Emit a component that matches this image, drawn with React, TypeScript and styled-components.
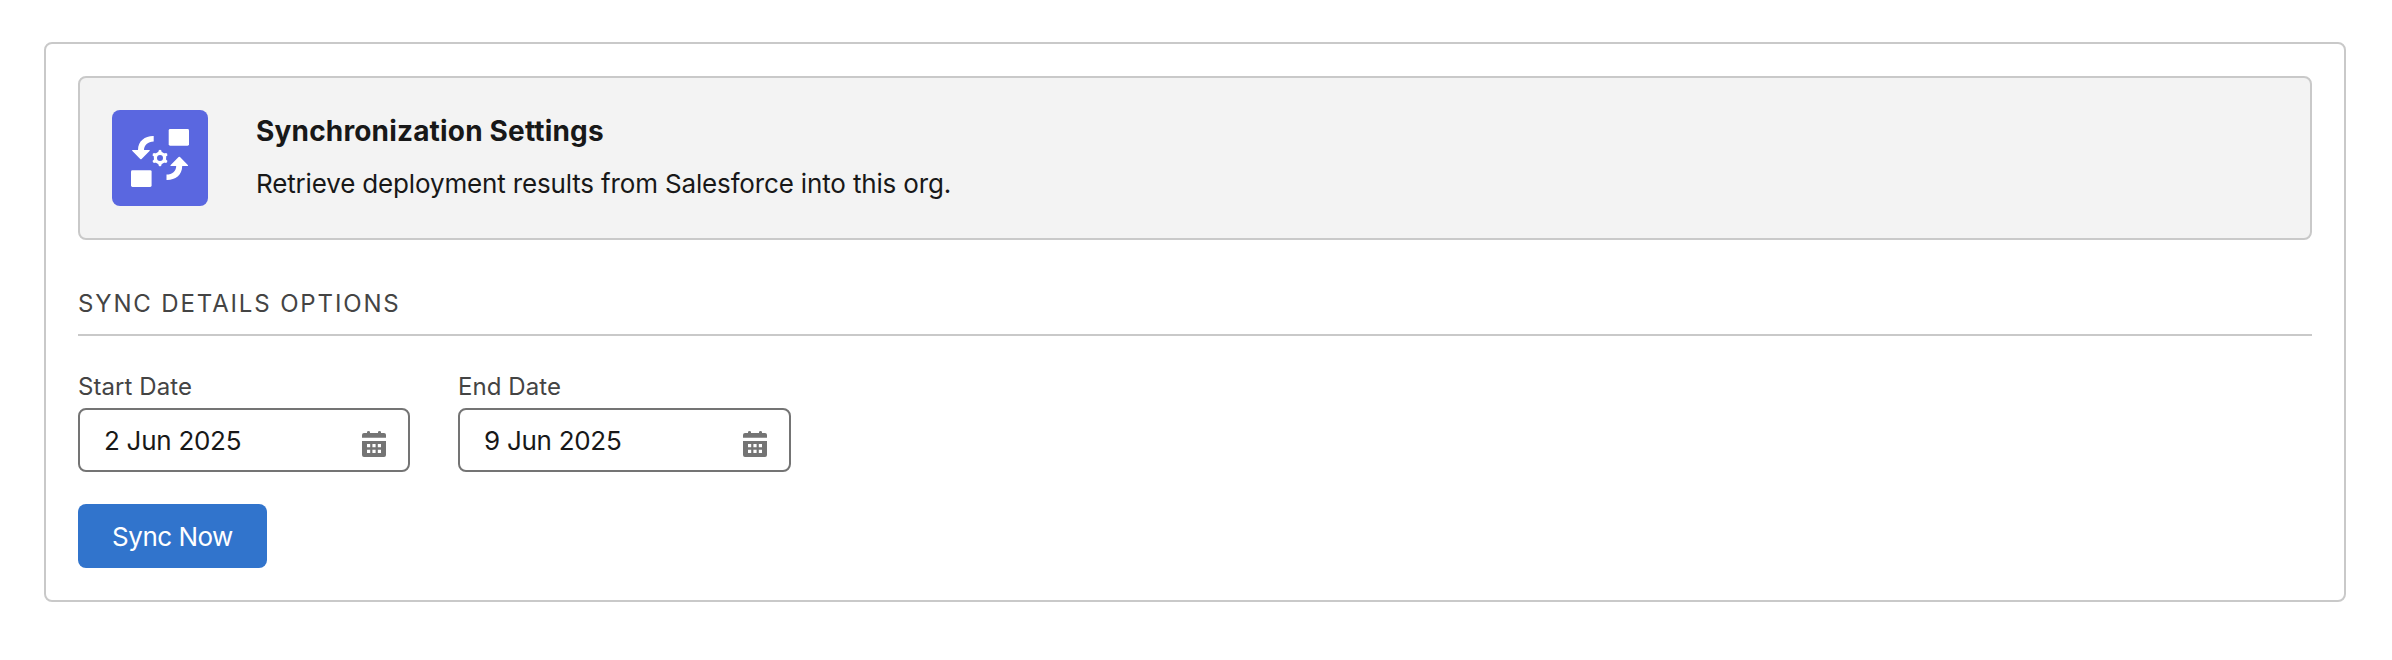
import React from "react";
import styled, { createGlobalStyle } from "styled-components";

const GlobalStyle = createGlobalStyle`
  * { box-sizing: border-box; }
  body {
    margin: 0;
    background: #fff;
    color: #181818;
    font-family: Inter, "Liberation Sans", sans-serif;
  }
`;

const Page = styled.main`
  padding: 42px 46px 58px 44px;
`;

const Card = styled.section`
  height: 560px;
  padding: 32px;
  border: 2px solid #c9c9c9;
  border-radius: 8px;
  background: #fff;
`;

const Banner = styled.header`
  display: flex;
  gap: 48px;
  height: 164px;
  padding: 32px;
  border: 2px solid #c9c9c9;
  border-radius: 8px;
  background: #f3f3f3;
`;

const IconTile = styled.div`
  width: 96px;
  height: 96px;
  flex: none;
  border-radius: 8px;
  background: #5a67e0;

  svg { display: block; }
`;

const Title = styled.h1`
  margin: 0 0 12px;
  font-size: 28px;
  line-height: 42px;
  font-weight: 700;
  letter-spacing: 0.17px;
`;

const Description = styled.p`
  margin: 0;
  font-size: 26px;
  line-height: 40px;
  letter-spacing: -0.155px;
`;

const SectionTitle = styled.h2`
  margin: 46px 0 32px;
  padding-bottom: 12px;
  border-bottom: 2px solid #c9c9c9;
  color: #444;
  font-size: 24px;
  line-height: 36px;
  font-weight: 400;
  letter-spacing: 1.86px;
  text-transform: uppercase;
`;

const Fields = styled.div`
  display: flex;
  gap: 48px;
  margin-bottom: 32px;
`;

const Field = styled.label<{ $width: number }>`
  display: flex;
  flex-direction: column;
  gap: 2px;
  width: ${(p) => p.$width}px;
`;

const FieldLabel = styled.span`
  color: #444;
  font-size: 24px;
  line-height: 38px;
  letter-spacing: 0.08px;
`;

const DateBox = styled.div`
  display: flex;
  align-items: center;
  justify-content: space-between;
  height: 64px;
  padding: 0 22px 0 24px;
  border: 2px solid #747474;
  border-radius: 8px;
  background: #fff;
`;

const DateValue = styled.span`
  padding-top: 2px;
  font-size: 26px;
  line-height: 58px;
  letter-spacing: -0.28px;
`;

const CalendarSvg = styled.svg`
  display: block;
  margin-top: 8px;
`;

const Button = styled.button`
  display: block;
  width: 189px;
  height: 64px;
  padding: 2px 0 0;
  border: 0;
  border-radius: 8px;
  background: #3174cc;
  color: #fff;
  font-family: inherit;
  font-size: 26px;
  line-height: 62px;
  letter-spacing: -0.5px;
`;

const SyncIcon = () => {
  const arrow =
    "M41.7 26V31.4C36 31.5 32 35 32 40H37C37.8 40 38 40.5 37.5 41L29.6 49Q28.9 49.6 28.2 49L20.4 41C19.9 40.5 20.1 40 20.9 40H26C26 31 33 26 41 26Z";
  return (
    <svg width="96" height="96" viewBox="0 0 96 96" fill="#fff">
      <rect x="56.7" y="19" width="20.3" height="16.7" rx="1.4" />
      <rect x="19" y="60.2" width="20.6" height="16.7" rx="1.4" />
      <path d={arrow} />
      <path d={arrow} transform="rotate(180 48.1 48)" />
      <circle cx="48" cy="48" r="4.6" fill="none" stroke="#fff" strokeWidth="3.2" />
      {[0, 60, 120, 180, 240, 300].map((angle) => (
        <path
          key={angle}
          d="M45.9 43.2L46.8 40.3Q48 39 49.2 40.3L50.1 43.2Z"
          transform={`rotate(${angle} 48 48)`}
        />
      ))}
    </svg>
  );
};

const CalendarIcon = () => (
  <CalendarSvg width="24" height="26" viewBox="0 0 24 26" fill="#747474">
    <path d="M2 2H5V1.3A1.5 1.3 0 0 1 8 1.3V2H16V1.3A1.5 1.3 0 0 1 19 1.3V2H22A2 2 0 0 1 24 4V6.8H0V4A2 2 0 0 1 2 2Z" />
    <path
      fillRule="evenodd"
      d="M0 10H24V24A2 2 0 0 1 22 26H2A2 2 0 0 1 0 24ZM5 13V16.2H8.2V13ZM10.4 13V16.2H13.6V13ZM15.8 13V16.2H19V13ZM5 18.8V22H8.2V18.8ZM10.4 18.8V22H13.6V18.8ZM15.8 18.8V22H19V18.8Z"
    />
  </CalendarSvg>
);

const DateField = ({ label, value, width }: { label: string; value: string; width: number }) => (
  <Field $width={width}>
    <FieldLabel>{label}</FieldLabel>
    <DateBox>
      <DateValue>{value}</DateValue>
      <CalendarIcon />
    </DateBox>
  </Field>
);

export default function App() {
  return (
    <>
      <GlobalStyle />
      <Page>
        <Card>
          <Banner>
            <IconTile>
              <SyncIcon />
            </IconTile>
            <div>
              <Title>Synchronization Settings</Title>
              <Description>Retrieve deployment results from Salesforce into this org.</Description>
            </div>
          </Banner>
          <SectionTitle>Sync Details Options</SectionTitle>
          <Fields>
            <DateField label="Start Date" value="2 Jun 2025" width={332} />
            <DateField label="End Date" value="9 Jun 2025" width={333} />
          </Fields>
          <Button type="button">Sync Now</Button>
        </Card>
      </Page>
    </>
  );
}
